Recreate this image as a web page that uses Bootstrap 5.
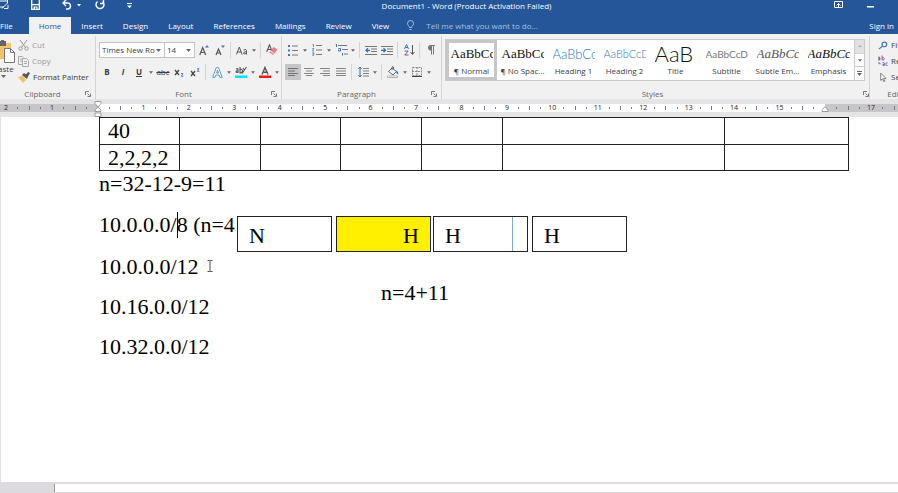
<!DOCTYPE html>
<html lang="en">
<head>
<meta charset="utf-8">
<meta name="viewport" content="width=device-width, initial-scale=1">
<title>Document1 - Word</title>
<link href="https://cdn.jsdelivr.net/npm/bootstrap@5.3.0/dist/css/bootstrap.min.css" rel="stylesheet">
<style>
:root{--brand:#25569a;--ui:#3c3c3c;--line:#d4d4d8}
body{font-family:"Open Sans","Noto Sans",sans-serif;font-size:8px;line-height:12px;color:var(--ui)}
button,select,input{font:inherit;color:inherit}
svg{display:block;flex:none}
.topbar{background:var(--brand);color:#fff}
.title-row{height:17px}
.plain{border:0;background:none;padding:0;display:flex;align-items:center;justify-content:center}
.title-text{padding-right:51px}
.quick{width:150px;height:10px}
.q-wide{margin-left:22px}.q-mid{margin-left:14px}.q-thin{margin-left:5px}
.tabs{height:17px}
.tab-link{color:#fff;text-decoration:none;padding:0 10px;height:17px;line-height:17px;white-space:nowrap}
.tab-link.file{padding:0 16px 0 0}
.tab-link.current{background:#f1f1f1;color:var(--brand)}
.tell{border:0;background:none;width:140px;padding:0;color:#a9c0de}
.tell::placeholder{color:#a9c0de;opacity:1}
.ribbon{background:#f1f1f1;height:65px}
.group{border-right:1px solid var(--line);height:63px;margin-top:2px;min-width:0}
.g-clip{width:96px}.g-font{width:186px}.g-para{width:160px}.g-edit{width:60px;border:0;flex:none;margin-right:-32px}
.g-font,.g-para,.g-clip{flex:none}
.group-body{height:52px}
.rows{padding:3px 0 0 3px}
.cmds{padding-top:1px}
.group-label{color:#666;height:12px}
.tool-row{height:22px}
.tool{width:16px;height:16px}
.tool.on{background:#c6c6c9}
.drop{width:8px;height:16px}
.divide{width:1px;height:16px;background:var(--line);margin:0 3px 0 2px;flex:none}
.combo{border:1px solid #c4c4c8;background:#fff;height:16px;padding-right:3px}
.combo select{appearance:none;border:0;background:none;padding:0 0 0 2px;min-width:0;height:14px;line-height:14px;width:100%}
.c-name{width:66px}.c-size{width:31px;margin-left:-1px;margin-right:1px}
.paste{width:29px;margin-left:-11px}
.cmd{height:16px;gap:3px}
.cmd.off{color:#999}
.gallery{border:1px solid #c9c9cd;background:#fff;height:42px;margin:3px 4px 0 3px}
.style-item{flex:1 1 0;min-width:0;flex-direction:column;border:3px solid transparent;padding:0 1px}
.style-item.picked{border-color:#c6c6c9}
.sample{width:42px;height:22px;line-height:22px;overflow:hidden;white-space:nowrap;text-align:left}
.s-serif{font-family:"Liberation Serif",serif;font-size:13px;color:#111}
.s-h1{font-family:"Lato",sans-serif;font-weight:300;font-size:13px;color:#2f75b8}
.s-h2{font-family:"Lato",sans-serif;font-weight:300;font-size:11px;color:#2f75b8}
.s-title{font-family:"Lato",sans-serif;font-weight:300;font-size:22px;color:#111}
.s-sub{font-family:"Lato",sans-serif;font-size:10px;color:#777}
.s-dim{color:#555}
.scroller{width:10px;border-left:1px solid #c9c9cd;flex:none}
.scroller button{flex:1 1 0;border-bottom:1px solid #d4d4d8}
.scroller button:first-child{background:#e1e1e4}
.ruler-strip{background:#e4e4e6;height:18px;padding-top:5px}
.ruler{height:8px;font-size:7px;line-height:8px;color:#222}
.r-left{width:98px;background:#c6c6c8;flex:none}
.r-mid{background:#fff;display:grid;grid-template-columns:repeat(16,minmax(0,1fr))}
.r-right{width:73px;background:#c6c6c8;flex:none}
.unit{display:flex;justify-content:flex-end;
 background:linear-gradient(#777,#777) 25% 50%/1px 2px no-repeat,linear-gradient(#777,#777) 50% 50%/1px 4px no-repeat,linear-gradient(#777,#777) 75% 50%/1px 2px no-repeat}
.r-left .unit,.r-right .unit{width:46px;flex:none}
.unit span{width:12px;margin-right:-6px;text-align:center}
.marker{position:absolute;z-index:2}
.m-start{left:94px;top:2px}
.m-end{right:69px;top:7px}
.page{background:#fff;border-left:1px solid #e0e0e6;padding-left:98px;font-family:"Liberation Serif",serif;font-size:22px;line-height:25px;color:#000}
.grid-table{width:calc(100% - 49px);table-layout:fixed;border-collapse:collapse}
.grid-table td{border:1px solid #222;height:27px;padding:0 0 0 8px;vertical-align:top;line-height:25px}
.grid-table tr+tr td{height:26px}
.page p{margin:0 0 16px}
.page p+p+p{margin-bottom:15px}
.caret-bar{display:inline-block;width:1px;height:26px;background:#000;vertical-align:top;margin-right:-1px}
.shapes{position:absolute;left:236px;top:99px}
.shape{width:95px;height:36px;border:1px solid #222;background:#fff;padding:6px 11px 0;line-height:25px}
.shape.fillin{background:#fff000}
.shape.near{margin-left:2px}.shape.far{margin-left:4px}
.shape.lined{background:linear-gradient(#7fa9d0,#7fa9d0) 78px 0/1px 100% no-repeat #fff}
.note{position:absolute;left:380px;top:163px}
.pointer{position:absolute;left:206px;top:143px}
.nextpage{height:11px;background:#dcdade;padding:2px 0 1px 54px;flex:none}
.nextpage div{background:#fff;border-left:1px solid #999;height:8px}
</style>
</head>
<body class="vh-100 d-flex flex-column overflow-hidden">
<svg width="0" height="0" class="position-absolute" aria-hidden="true">
 <symbol id="dn" viewBox="0 0 5 3"><path d="M0 0h5L2.500 3z" fill="#666"/></symbol>
 <symbol id="launch" viewBox="0 0 6 6"><path d="M.5 4V.5H4M2.500 2.500l2 2M5.500 2.500v3h-3" fill="none" stroke="#777"/></symbol>
</svg>
<header class="topbar flex-shrink-0">
 <div class="title-row d-flex position-relative">
  <div class="quick d-flex align-items-center flex-shrink-0">
   <button class="plain" aria-label="Touch mode"><svg width="9" height="10" viewBox="0 0 9 10" fill="none" stroke="#fff"><path d="M0 1h7M0 7h4M7.500 0v3L2 8.500M4 8.500h4V5"/></svg></button>
   <button class="plain q-wide" aria-label="Save"><svg width="9" height="10" viewBox="0 0 9 10"><path d="M.7 0v9.300h7.600V0" fill="none" stroke="#fff" stroke-width="1.300"/><path d="M1 4h7v1.300H1zM2.500 6.500h4V9h-1V7.500H4V9H2.500z" fill="#fff"/></svg></button>
   <button class="plain q-wide" aria-label="Undo"><svg width="10" height="10" viewBox="0 0 10 10" fill="none" stroke="#fff" stroke-width="1.400"><path d="M4 0L1 3l3 3M1 3h4.500a3 3 0 0 1 0 6H4"/></svg></button>
   <button class="plain q-thin" aria-label="Undo list"><svg width="4" height="3" viewBox="0 0 4 3"><path d="M0 0h4L2 2.500z" fill="#fff"/></svg></button>
   <button class="plain q-mid" aria-label="Redo"><svg width="10" height="10" viewBox="0 0 10 10" fill="none" stroke="#fff" stroke-width="1.400"><path d="M2.500 1.500a4 4 0 1 0 5 0M5 3.500h3.500V0"/></svg></button>
   <button class="plain q-wide" aria-label="Customize toolbar"><svg width="5" height="5" viewBox="0 0 5 5"><path d="M0 0h5v1H0zM0 2.500h5L2.500 5z" fill="#fff"/></svg></button>
  </div>
  <div class="title-text flex-grow-1 text-center">Document1 - Word (Product Activation Failed)</div>
  <div class="d-flex gap-4 align-items-center pe-4 h-50 flex-shrink-0">
   <button class="plain" aria-label="Ribbon display options"><svg width="9" height="7" viewBox="0 0 9 7" fill="none" stroke="#fff"><path d="M.5.5h8v6h-8zM4.500 6V2.500M2.500 4.500l2-2 2 2"/></svg></button>
   <button class="plain" aria-label="Minimize"><svg width="7" height="7" viewBox="0 0 7 7"><path d="M0 5h7v1.500H0z" fill="#fff"/></svg></button>
  </div>
 </div>
 <nav class="tabs d-flex align-items-center" aria-label="Ribbon tabs">
  <a href="#" class="tab-link file">File</a><a href="#" class="tab-link current" aria-current="page">Home</a><a href="#" class="tab-link">Insert</a><a href="#" class="tab-link">Design</a><a href="#" class="tab-link">Layout</a><a href="#" class="tab-link">References</a><a href="#" class="tab-link">Mailings</a><a href="#" class="tab-link">Review</a><a href="#" class="tab-link">View</a>
  <label for="tell" class="d-flex mx-2 pe-1" aria-label="Tell me"><svg width="7" height="11" viewBox="0 0 7 11" fill="none" stroke="#a9c0de"><path d="M2.500 7.500C2.500 6 .5 5.500.5 3.500a3 3 0 0 1 6 0c0 2-2 2.500-2 4zM2.500 9.500h2"/></svg></label>
  <input id="tell" class="tell" type="text" placeholder="Tell me what you want to do...">
  <a href="#" class="tab-link ms-auto pe-1">Sign in</a>
 </nav>
</header>

<section class="ribbon d-flex flex-shrink-0 overflow-hidden" aria-label="Home">
 <div class="group g-clip">
  <div class="group-body d-flex">
   <button class="plain paste flex-column flex-shrink-0 justify-content-start pt-1"><svg width="24" height="23" viewBox="0 0 24 23"><path d="M2 3h17v16H2z" fill="#f2c56b"/><path d="M6 1h8v5H6z" fill="#666"/><path d="M9 0h3v3H9z" fill="#666"/><path d="M12.500 8.500h6l4 4v10h-10z" fill="#fff" stroke="#777"/><path d="M18.500 8.500v4h4" fill="none" stroke="#777"/></svg><span>Paste</span><svg width="5" height="3"><use href="#dn"/></svg></button>
   <div class="cmds d-flex flex-column align-items-start flex-shrink-0">
    <button class="plain cmd off"><svg width="11" height="11" viewBox="0 0 11 11" fill="none" stroke="#999"><path d="M2 0l5.500 7.500M9 0L3.500 7.500"/><circle cx="2.500" cy="8.500" r="1.700"/><circle cx="8.500" cy="8.500" r="1.700"/></svg>Cut</button>
    <button class="plain cmd off"><svg width="11" height="11" viewBox="0 0 11 11" fill="none" stroke="#aaa"><path d="M4 8.500H.5v-8h4l1 1M2 3h2M2 5h2M4.500 2.500h4l2 2v6h-6zM6 5.500h3M6 7.500h3"/></svg>Copy</button>
    <button class="plain cmd"><svg width="12" height="11" viewBox="0 0 12 11"><path d="M0 5l5-1 3 4-3 3z" fill="#f0c060"/><path d="M4 3l2-2 2 1.500L10 0l2 1-2 3.500L9 7z" fill="#555"/></svg>Format Painter</button>
   </div>
  </div>
  <div class="group-label d-flex align-items-center pe-1"><span class="flex-grow-1 text-center">Clipboard</span><button class="plain" aria-label="Clipboard settings"><svg width="6" height="6"><use href="#launch"/></svg></button></div>
 </div>

 <div class="group g-font">
  <div class="group-body rows">
   <div class="tool-row d-flex align-items-center">
    <div class="combo c-name d-flex align-items-center"><select aria-label="Font"><option>Times New Ro</option></select><svg width="5" height="3"><use href="#dn"/></svg></div>
    <div class="combo c-size d-flex align-items-center"><select aria-label="Font size"><option>14</option></select><svg width="5" height="3"><use href="#dn"/></svg></div>
    <button class="plain tool" aria-label="Grow font"><svg width="10" height="11" viewBox="0 0 10 11"><path d="M.7 10L3.700 2.500 6.700 10M1.800 7.500h4" fill="none" stroke="#555" stroke-width="1.200"/><path d="M6 2.500L8 0l2 2.500z" fill="#3b78b8"/></svg></button>
    <button class="plain tool" aria-label="Shrink font"><svg width="10" height="11" viewBox="0 0 10 11"><path d="M1 10l2.500-6L6 10M2 8h3" fill="none" stroke="#555" stroke-width="1.200"/><path d="M6 .5h4L8 3z" fill="#3b78b8"/></svg></button>
    <span class="divide"></span>
    <button class="plain tool" aria-label="Change case"><svg width="12" height="9" viewBox="0 0 12 9" fill="none" stroke="#555"><path d="M.5 8.500L3.300 1l2.800 7.500M1.500 6h3.700M7.500 4q3-1.500 3 .7v3.800M10.500 5.700q-3 0-3 1.500t3 .3"/></svg></button>
    <button class="plain drop" aria-label="Case options"><svg width="4" height="3"><use href="#dn"/></svg></button>
    <span class="divide"></span>
    <button class="plain tool" aria-label="Clear formatting"><svg width="12" height="12" viewBox="0 0 12 12"><path d="M.7 8L3.500.8 5.500 6M2 5.500h3" fill="none" stroke="#555" stroke-width="1.100"/><path d="M7.500 3l4 2.500-4 5.500-4-2.500z" fill="#e97c8a"/><path d="M4.500 7l4 2.800" stroke="#fff" stroke-width=".8"/></svg></button>
   </div>
   <div class="tool-row d-flex align-items-center">
    <button class="plain tool fw-bold" aria-label="Bold">B</button>
    <button class="plain tool fst-italic fw-bold" aria-label="Italic">I</button>
    <button class="plain tool fw-bold text-decoration-underline" aria-label="Underline">U</button>
    <button class="plain drop" aria-label="Underline options"><svg width="4" height="3"><use href="#dn"/></svg></button>
    <button class="plain tool text-decoration-line-through" aria-label="Strikethrough">abc</button>
    <button class="plain tool" aria-label="Subscript"><svg width="10" height="9" viewBox="0 0 10 9" fill="none"><path d="M1 2l4 5M5 2L1 7" stroke="#444" stroke-width="1.300"/><path d="M7 5.500h2L7.300 8.300H9.500" stroke="#3b78b8" stroke-width=".9"/></svg></button>
    <button class="plain tool" aria-label="Superscript"><svg width="10" height="9" viewBox="0 0 10 9" fill="none"><path d="M1 3l4 5M5 3L1 8" stroke="#444" stroke-width="1.300"/><path d="M7 .7h2L7.300 3.300H9.500" stroke="#3b78b8" stroke-width=".9"/></svg></button>
    <span class="divide"></span>
    <button class="plain tool" aria-label="Text effects"><svg width="11" height="11" viewBox="0 0 11 11" fill="#fff" stroke="#4b8ccc" stroke-width=".9"><path d="M.7 10.300L4.200.7h2.400l3.500 9.600H7.800L7 8H3.800L3 10.300zM4.500 6h2L5.500 3z"/></svg></button>
    <button class="plain drop" aria-label="Effects options"><svg width="4" height="3"><use href="#dn"/></svg></button>
    <button class="plain tool" aria-label="Highlight"><svg width="12" height="12" viewBox="0 0 12 12" fill="none"><path d="M0 9.500h12V12H0z" fill="#00e0ff"/><path d="M1 3q2-1 2 .5V7M3 4.500q-2 0-2 1.200T3 6M5 1v6q2.500 0 2.500-2T5 3.500M11.500 1L7 7.500M8 2l1.500 2" stroke="#555" stroke-width="1.100"/></svg></button>
    <button class="plain drop" aria-label="Highlight colors"><svg width="4" height="3"><use href="#dn"/></svg></button>
    <button class="plain tool" aria-label="Font color"><svg width="12" height="12" viewBox="0 0 12 12"><path d="M3 8.500L6 1.500l3 7M4 6.200h4" fill="none" stroke="#555" stroke-width="1.400"/><path d="M0 9.500h12V12H0z" fill="#f21a0c"/></svg></button>
    <button class="plain drop" aria-label="Font colors"><svg width="4" height="3"><use href="#dn"/></svg></button>
   </div>
  </div>
  <div class="group-label d-flex align-items-center pe-1"><span class="flex-grow-1 text-center">Font</span><button class="plain" aria-label="Font settings"><svg width="6" height="6"><use href="#launch"/></svg></button></div>
 </div>

 <div class="group g-para">
  <div class="group-body rows">
   <div class="tool-row d-flex align-items-center">
    <button class="plain tool" aria-label="Bullets"><svg width="10" height="11" viewBox="0 0 10 11"><path d="M0 0h2v2H0zM0 4.500h2v2H0zM0 9h2v2H0z" fill="#3b78b8"/><path d="M4 1h6M4 5.500h6M4 10h6" stroke="#777"/></svg></button>
    <button class="plain drop" aria-label="Bullet styles"><svg width="4" height="3"><use href="#dn"/></svg></button>
    <button class="plain tool" aria-label="Numbering"><svg width="10" height="12" viewBox="0 0 10 12" fill="none"><path d="M.5.5H1.500V3M.3 4.500h1.500L.5 7h1.500M.3 8.700h1.500v2.600H.3M.5 10h1" stroke="#3b78b8" stroke-width=".8"/><path d="M4 1.500h6M4 6h6M4 10.500h6" stroke="#777"/></svg></button>
    <button class="plain drop" aria-label="Number styles"><svg width="4" height="3"><use href="#dn"/></svg></button>
    <button class="plain tool" aria-label="Multilevel list"><svg width="13" height="12" viewBox="0 0 13 12" fill="none"><path d="M.5 0h1v3M3.500 4.500h2V7h-2V5.500M7.500 9v2.500" stroke="#3b78b8"/><path d="M3 1.500h9M7 5.500h6M9 10h4" stroke="#777"/></svg></button>
    <button class="plain drop" aria-label="List levels"><svg width="4" height="3"><use href="#dn"/></svg></button>
    <span class="divide"></span>
    <button class="plain tool" aria-label="Decrease indent"><svg width="12" height="9" viewBox="0 0 12 9" fill="none"><path d="M0 .5h12M6 3h6M6 5.500h6M0 8.500h12" stroke="#777"/><path d="M5 4.300H1M3 2.300l-2 2 2 2" stroke="#2f70b5" stroke-width="1.300"/></svg></button>
    <button class="plain tool" aria-label="Increase indent"><svg width="12" height="9" viewBox="0 0 12 9" fill="none"><path d="M0 .5h12M6 3h6M6 5.500h6M0 8.500h12" stroke="#777"/><path d="M0 4.300h4.500M2.500 2.300l2 2-2 2" stroke="#2f70b5" stroke-width="1.300"/></svg></button>
    <span class="divide"></span>
    <button class="plain tool" aria-label="Sort"><svg width="11" height="12" viewBox="0 0 11 12" fill="none"><path d="M.5 5l2-4.500 2 4.500M1.200 3.500h2.600" stroke="#3b78b8"/><path d="M.7 7h3.500L.7 11h3.800" stroke="#8a4fa0"/><path d="M8.500 1v9M6.500 8l2 2.500 2-2.500" stroke="#555"/></svg></button>
    <span class="divide"></span>
    <button class="plain tool" aria-label="Show paragraph marks"><svg width="8" height="10" viewBox="0 0 8 10"><path d="M3.500 0H8v1H7v8.500H6V1H5v8.500H4V5.500A2.700 2.700 0 0 1 3.500 0z" fill="#777"/></svg></button>
   </div>
   <div class="tool-row d-flex align-items-center">
    <button class="plain tool on" aria-label="Align left" aria-pressed="true"><svg width="10" height="8" viewBox="0 0 10 8"><path d="M0 .5h10M0 3h7M0 5.500h10M0 7.500h7" stroke="#666" stroke-width=".9"/></svg></button>
    <button class="plain tool" aria-label="Center"><svg width="10" height="8" viewBox="0 0 10 8"><path d="M0 .5h10M2 3h6M0 5.500h10M2 7.500h6" stroke="#777" stroke-width=".9"/></svg></button>
    <button class="plain tool" aria-label="Align right"><svg width="10" height="8" viewBox="0 0 10 8"><path d="M0 .5h10M3 3h7M0 5.500h10M3 7.500h7" stroke="#777" stroke-width=".9"/></svg></button>
    <button class="plain tool" aria-label="Justify"><svg width="10" height="8" viewBox="0 0 10 8"><path d="M0 .5h10M0 3h10M0 5.500h10M0 7.500h10" stroke="#777" stroke-width=".9"/></svg></button>
    <span class="divide"></span>
    <button class="plain tool" aria-label="Line spacing"><svg width="11" height="12" viewBox="0 0 11 12" fill="none"><path d="M2 1v10M.3 3L2 1l1.700 2M.3 9L2 11l1.700-2" stroke="#2f70b5"/><path d="M5 2.500h6M5 5h6M5 7.500h6M5 10h6" stroke="#777" stroke-width=".9"/></svg></button>
    <button class="plain drop" aria-label="Spacing options"><svg width="4" height="3"><use href="#dn"/></svg></button>
    <span class="divide"></span>
    <button class="plain tool" aria-label="Shading"><svg width="12" height="12" viewBox="0 0 12 12" fill="none"><path d="M5 2l4.500 3.500L6 9 1.500 5.500zM5 4V1q1-1 1.500 0v2" stroke="#666"/><path d="M9 4.500q3 1 2 4-2-1-2-4z" fill="#2f70b5"/><path d="M.5 10h10v1.500H.5z" fill="#fff" stroke="#999" stroke-width=".7"/></svg></button>
    <button class="plain drop" aria-label="Shading colors"><svg width="4" height="3"><use href="#dn"/></svg></button>
    <button class="plain tool" aria-label="Borders"><svg width="10" height="10" viewBox="0 0 10 10" fill="none"><path d="M.5.5h9v8h-9zM5 0v9M0 4.500h10" stroke="#888" stroke-dasharray="2 1"/><path d="M0 9.500h10" stroke="#444"/></svg></button>
    <button class="plain drop" aria-label="Border options"><svg width="4" height="3"><use href="#dn"/></svg></button>
   </div>
  </div>
  <div class="group-label d-flex align-items-center pe-1"><span class="flex-grow-1 text-center">Paragraph</span><button class="plain" aria-label="Paragraph settings"><svg width="6" height="6"><use href="#launch"/></svg></button></div>
 </div>

 <div class="group flex-grow-1">
  <div class="group-body overflow-hidden">
   <div class="gallery d-flex">
    <button class="plain style-item picked"><span class="sample s-serif">AaBbCc</span><span>¶ Normal</span></button>
    <button class="plain style-item"><span class="sample s-serif">AaBbCc</span><span class="text-nowrap">¶ No Spac...</span></button>
    <button class="plain style-item"><span class="sample s-h1">AaBbCc</span><span>Heading 1</span></button>
    <button class="plain style-item"><span class="sample s-h2">AaBbCcD</span><span>Heading 2</span></button>
    <button class="plain style-item"><span class="sample s-title">AaB</span><span>Title</span></button>
    <button class="plain style-item"><span class="sample s-sub">AaBbCcD</span><span>Subtitle</span></button>
    <button class="plain style-item"><span class="sample s-serif s-dim fst-italic">AaBbCc</span><span class="text-nowrap">Subtle Em...</span></button>
    <button class="plain style-item"><span class="sample s-serif fst-italic">AaBbCc</span><span>Emphasis</span></button>
    <div class="scroller d-flex flex-column">
     <button class="plain" aria-label="Previous styles"><svg width="4" height="2" viewBox="0 0 4 2"><path d="M0 2h4L2 0z" fill="#aaa"/></svg></button>
     <button class="plain" aria-label="Next styles"><svg width="4" height="3"><use href="#dn"/></svg></button>
     <button class="plain border-0" aria-label="All styles"><svg width="5" height="5" viewBox="0 0 5 5"><path d="M0 0h5v1H0zM0 2h5L2.500 5z" fill="#666"/></svg></button>
    </div>
   </div>
  </div>
  <div class="group-label d-flex align-items-center"><span class="flex-grow-1 text-center">Styles</span><button class="plain" aria-label="Style settings"><svg width="6" height="6"><use href="#launch"/></svg></button></div>
 </div>

 <div class="group g-edit">
  <div class="group-body cmds ps-2 d-flex flex-column align-items-start">
   <button class="plain cmd"><svg width="10" height="9" viewBox="0 0 11 9" fill="none" stroke="#3b78b8" stroke-width="1.300"><circle cx="7" cy="3.300" r="2.600"/><path d="M5 5L1 8.500"/></svg>Find</button>
   <button class="plain cmd"><svg width="10" height="12" viewBox="0 0 11 12" fill="none"><path d="M0 2q2-1 2 .5V5M2 3.500Q0 3.500 0 4.500t2 0" stroke="#555"/><path d="M4.500 0v5q2.500 0 2.500-1.500T4.500 2.500M5 8q2-1 2 .5V11M7 9.500q-2 0-2 1t2 0" stroke="#8a4fa0"/><path d="M10.500 8q-2-.5-2 1.500t2 1.500M1 7v2h2" stroke="#3b78b8"/></svg>Replace</button>
   <button class="plain cmd"><svg width="10" height="11" viewBox="0 0 11 11" fill="#fff" stroke="#666" stroke-width=".9"><path d="M3 .7v8l2-1.700 1.300 3 1.200-.5L6.200 6.500H8.800z"/></svg>Select</button>
  </div>
  <div class="group-label text-center">Editing</div>
 </div>
</section>

<div class="ruler-strip position-relative flex-shrink-0">
 <svg class="marker m-start" width="8" height="16" viewBox="0 0 8 16" fill="#fff" stroke="#888" stroke-width=".8"><path d="M1 .5h6v2L4 6 1 2.500zM4 6l3 3v1.500H1V9zM1 12h6v3.500H1z"/></svg>
 <svg class="marker m-end" width="8" height="7" viewBox="0 0 8 7" fill="#fff" stroke="#888" stroke-width=".8"><path d="M4 .7l3 3.300v1.500H1V4z"/></svg>
 <div class="ruler d-flex overflow-hidden">
  <div class="r-left d-flex justify-content-end"><div class="unit"><span>2</span></div><div class="unit"><span>1</span></div><div class="unit"></div></div>
  <div class="r-mid flex-grow-1">
   <div class="unit"><span>1</span></div><div class="unit"><span>2</span></div><div class="unit"><span>3</span></div><div class="unit"><span>4</span></div><div class="unit"><span>5</span></div><div class="unit"><span>6</span></div><div class="unit"><span>7</span></div><div class="unit"><span>8</span></div><div class="unit"><span>9</span></div><div class="unit"><span>10</span></div><div class="unit"><span>11</span></div><div class="unit"><span>12</span></div><div class="unit"><span>13</span></div><div class="unit"><span>14</span></div><div class="unit"><span>15</span></div><div class="unit"></div>
  </div>
  <div class="r-right d-flex overflow-hidden"><div class="unit"><span>17</span></div><div class="unit"></div></div>
 </div>
</div>

<main class="page position-relative flex-grow-1 overflow-hidden">
 <table class="grid-table" aria-label="Subnet table">
  <colgroup><col style="width:10.700%"><col style="width:10.800%"><col style="width:10.700%"><col style="width:10.800%"><col style="width:10.800%"><col style="width:29.600%"><col></colgroup>
  <tbody>
  <tr><td>40</td><td></td><td></td><td></td><td></td><td></td><td></td></tr>
  <tr><td>2,2,2,2</td><td></td><td></td><td></td><td></td><td></td><td></td></tr>
  </tbody>
 </table>
 <p>n=32-12-9=11</p>
 <p>10.0.0.0/<span class="caret-bar"></span>8 (n=4</p>
 <p>10.0.0.0/12</p>
 <p>10.16.0.0/12</p>
 <p>10.32.0.0/12</p>
 <div class="shapes d-flex">
  <div class="shape">N</div><div class="shape fillin far text-end">H</div><div class="shape lined near">H</div><div class="shape far">H</div>
 </div>
 <div class="note">n=4+11</div>
 <svg class="pointer" width="6" height="12" viewBox="0 0 6 12" fill="none" stroke="#333" stroke-width=".9"><path d="M.5.5H2.500L3 1l.5-.5h2M3 1v10M.5 11.500h2L3 11l.5.5h2"/></svg>
</main>
<div class="nextpage"><div></div></div>
<script src="https://cdn.jsdelivr.net/npm/bootstrap@5.3.0/dist/js/bootstrap.bundle.min.js"></script>
</body>
</html>
